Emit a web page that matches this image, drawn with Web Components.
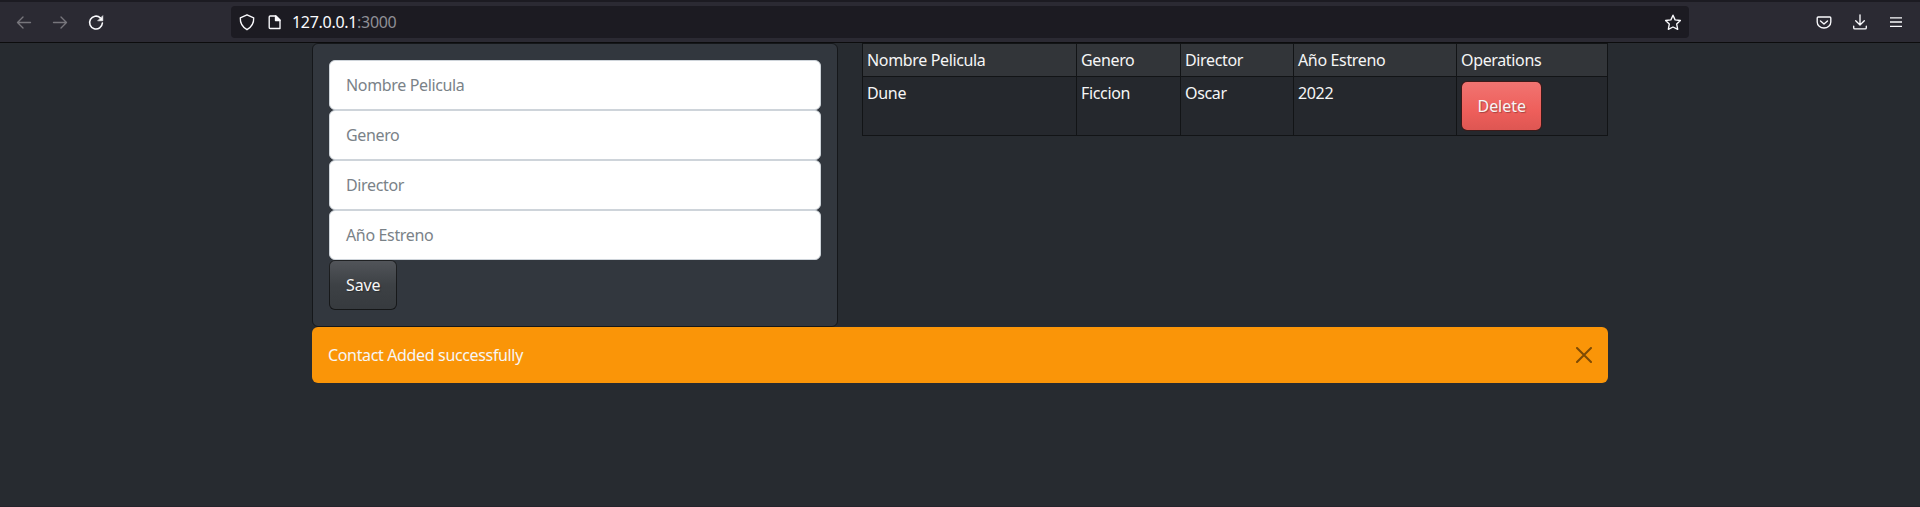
<!DOCTYPE html>
<html lang="es">
<head>
<meta charset="utf-8">
<title>Peliculas</title>
<style>
html,body{margin:0;height:100%}
body{background:#272b30;color:#f6f6f6;font:16px/24px "Noto Sans",sans-serif;letter-spacing:-.35px;overflow:hidden}
</style>
</head>
<body>
<movie-app></movie-app>
<script>
const define = (name, html) => customElements.define(name, class extends HTMLElement {
  constructor() {
    super();
    const t = document.createElement('template');
    t.innerHTML = '<style>*{box-sizing:border-box}</style>' + html;
    this.attachShadow({mode: 'open'}).append(t.content.cloneNode(true));
  }
});

define('browser-bar', `
<style>
:host{display:flex;align-items:center;height:43px;box-sizing:border-box;border-top:2px solid #1c1b22;border-bottom:1px solid #0c0c0d;background:#2b2a33;padding:0 15px 0 15px;color:#fbfbfe}
svg{width:18px;height:18px;fill:none;stroke:currentColor;stroke-width:1.35;stroke-linecap:round;stroke-linejoin:round;flex:none;display:block}
.nav{display:flex;gap:18px;width:216px}
.off{color:#77767c}
.url{display:flex;align-items:center;height:32px;width:1458px;border-radius:4px;background:#1c1b22;padding:0 7px}
.url svg+svg{margin-left:10px}
.addr{margin-left:8px;flex:1;letter-spacing:-.3px}
.port{color:#8f8f96}
.tools{display:flex;gap:18px;margin-left:auto}
</style>
<div class="nav">
<svg class="off" viewBox="0 0 18 18"><path d="M15.500 9.500H2.500M8 4L2.500 9.500L8 15"/></svg>
<svg class="off" viewBox="0 0 18 18"><path d="M2.500 9.500h13M10 4L15.500 9.500L10 15"/></svg>
<svg viewBox="0 0 18 18" style="stroke-width:1.6"><path d="M13.300 4.800A6.400 6.400 0 1 0 15.400 10"/><path d="M15.800 3v4.800h-4.800z" fill="currentColor" stroke-width=".6"/></svg>
</div>
<div class="url">
<svg viewBox="0 0 18 18"><path d="M9 1.800L15.700 4.800c.3 5.400-1.700 9-6.700 11.900C4 13.800 2 10.200 2.300 4.800z"/></svg>
<svg viewBox="0 0 18 18"><path d="M4.200 3h5.800l4 4v8.500h-9.800q-1 0-1-1v-10.500q0-1 1-1z"/><path d="M9.500 3v4.500h4.500z" fill="currentColor"/></svg>
<div class="addr">127.0.0.1<span class="port">:3000</span></div>
<svg viewBox="0 0 18 18"><path d="M9 2.200l2.100 4.700 5.300.6-3.700 3.600 1 5.200L9 14 4.300 16.300l1-5.200L1.600 7.500l5.300-.6z"/></svg>
</div>
<div class="tools">
<svg viewBox="0 0 18 18"><path d="M3.200 4h11.600q1 0 1 1v4a6.800 6 0 0 1-13.600 0V5q0-1 1-1zM5.500 8L9 11.100l3.500-3.100"/></svg>
<svg viewBox="0 0 18 18"><path d="M9 1.800v10M4.700 7.800L9 12 13.300 7.800M2.700 13.200v1.500q0 1.200 1.200 1.200h10.200q1.200 0 1.200-1.200v-1.500"/></svg>
<svg viewBox="0 0 18 18" style="stroke-linecap:butt"><path d="M3 4.800h12M3 9h12M3 13.400h12"/></svg>
</div>`);

define('text-field', `
<style>
:host{display:block;height:50px;box-sizing:border-box;padding:12px 16px;background:#fff;color:#7a8288;border:1px solid #ced4da;border-radius:6px}
</style><slot></slot>`);

define('action-button', `
<style>
:host{display:block;height:50px;box-sizing:border-box;padding:12px 16px;border:1px solid rgba(0,0,0,.6);border-radius:6px;letter-spacing:-.15px;text-shadow:1px 1px 1px rgba(0,0,0,.3);background:linear-gradient(#52555a,#3d4145 50%,#363a3e) border-box}
:host([kind=danger]){letter-spacing:-.05px;padding-left:15.500px;background:linear-gradient(#f17471,#ee5f5b 60%,#de5652) padding-box,#96413f border-box}
</style><slot></slot>`);

define('form-card', `
<style>
:host{display:block;height:284px;box-sizing:border-box;padding:16px;border:1px solid #15171a;border-radius:6px;background:#32373e}
action-button{width:68px}
</style>
<text-field>Nombre Pelicula</text-field>
<text-field>Genero</text-field>
<text-field>Director</text-field>
<text-field>Año Estreno</text-field>
<action-button>Save</action-button>`);

define('table-cell', `
<style>
:host{display:block;box-sizing:border-box;padding:4px;border:solid #121416;border-width:1px 0 0 1px;background:#25282d}
:host([head]){background:#323539}
:host([last]){border-right-width:1px}
:host([bottom]){border-bottom-width:1px}
</style><slot></slot>`);

define('movie-table', `
<style>
:host{display:grid;grid-template-columns:214px 104px 113px 163px 152px;grid-template-rows:33px 60px}
action-button{width:81px}
</style>
<table-cell head>Nombre Pelicula</table-cell><table-cell head>Genero</table-cell><table-cell head>Director</table-cell><table-cell head>Año Estreno</table-cell><table-cell head last>Operations</table-cell>
<table-cell bottom>Dune</table-cell><table-cell bottom>Ficcion</table-cell><table-cell bottom>Oscar</table-cell><table-cell bottom>2022</table-cell><table-cell bottom last><action-button kind="danger">Delete</action-button></table-cell>`);

define('alert-bar', `
<style>
:host{display:flex;align-items:center;justify-content:space-between;height:56px;box-sizing:border-box;padding:0 16px;background:#fa9508;border-radius:6px}
svg{width:16px;height:16px;stroke:#7d4a04;stroke-width:2;fill:none;stroke-linecap:round}
</style><slot></slot>
<svg viewBox="0 0 16 16"><path d="M1 1l14 14M15 1L1 15"/></svg>`);

define('movie-app', `
<style>
:host{display:flex;flex-direction:column;height:507px;box-sizing:border-box;border-bottom:1px solid #24232b}
main{width:1296px;margin:0 auto}
.row{display:grid;grid-template-columns:526px 746px;column-gap:24px}
</style>
<browser-bar></browser-bar>
<main>
<div class="row"><form-card></form-card><movie-table></movie-table></div>
<alert-bar>Contact Added successfully</alert-bar>
</main>`);
</script>
</body>
</html>
